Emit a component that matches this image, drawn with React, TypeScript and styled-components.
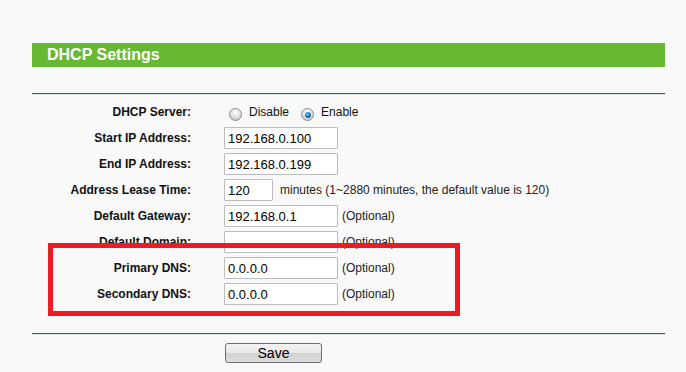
import React, { FC } from 'react';
import styled, { createGlobalStyle, css } from 'styled-components';

const GlobalStyle = createGlobalStyle`
  body {
    margin: 0;
    background: #f9f9f9;
    font-family: "Liberation Sans", Arial, sans-serif;
    color: #000;
  }
`;

const Page = styled.div`
  width: 633px;
  padding: 43px 0 0 32px;
`;

const Header = styled.div`
  height: 24px;
  line-height: 24px;
  background: #67b832;
  padding-left: 15px;
  color: #fff;
  font-weight: 700;
  font-size: 16px;
`;

const Divider = styled.div<{ gap: number }>`
  margin-top: ${props => props.gap}px;
  border-top: 1px solid #1c6b3a;
  border-bottom: 1px solid #dbe6de;
`;

const Form = styled.div`
  position: relative;
  padding-top: 4px;
  margin-bottom: 26px;
`;

const Row = styled.div`
  display: grid;
  grid-template-columns: 159px 1fr;
  column-gap: 33px;
  height: 26px;
  align-items: center;
`;

const Label = styled.div`
  text-align: right;
  font-weight: 700;
  font-size: 12px;
  color: #111;
`;

const Field = styled.div`
  display: flex;
  align-items: center;
  font-size: 12px;
  color: #222;
`;

const TextBox = styled.div<{ width?: number }>`
  box-sizing: border-box;
  width: ${props => props.width ?? 114}px;
  height: 22px;
  line-height: 22px;
  padding-left: 3px;
  background: #fff;
  border: 1px solid #bcbcbc;
  border-radius: 1px;
  font-size: 13px;
  color: #000;
  margin-right: ${props => (props.width ? 7 : 4)}px;
`;

const RadioDot = styled.span<{ checked?: boolean }>`
  box-sizing: border-box;
  display: inline-block;
  width: 13px;
  height: 13px;
  border-radius: 50%;
  border: 1px solid #8e8e8e;
  background: radial-gradient(circle at 50% 30%, #ffffff 0%, #dedede 55%, #bdbdbd 100%);
  margin: 5px 7px 0 5px;
  position: relative;
  ${props => props.checked && css`
    &:after {
      content: '';
      position: absolute;
      left: 2.5px;
      top: 2.5px;
      width: 6px;
      height: 6px;
      border-radius: 50%;
      background: radial-gradient(circle at 40% 35%, #6cc6ff 0%, #1570b3 55%, #083f69 100%);
    }
  `}
`;

const RadioText = styled.span`
  margin-right: 7px;
  font-size: 12px;
  color: #111;
`;

const Annotation = styled.div`
  position: absolute;
  left: 16px;
  top: 148px;
  width: 412px;
  height: 73px;
  box-sizing: border-box;
  border: 5px solid #ed1c24;
  pointer-events: none;
`;

const ButtonBar = styled.div`
  padding: 8px 0 0 193px;
`;

const SaveButton = styled.button`
  box-sizing: border-box;
  width: 97px;
  height: 20px;
  padding: 0;
  border: 1px solid #6f6f6f;
  border-radius: 3px;
  background: linear-gradient(#f4f4f4 0%, #e8e8e8 50%, #d2d2d2 51%, #dcdcdc 100%);
  font-family: "Liberation Sans", Arial, sans-serif;
  font-size: 14px;
  line-height: 18px;
  color: #000;
`;

interface IField {
  label: string;
  value: string;
  note?: string;
  width?: number;
}

const fields: IField[] = [
  { label: 'Start IP Address:', value: '192.168.0.100' },
  { label: 'End IP Address:', value: '192.168.0.199' },
  { label: 'Address Lease Time:', value: '120', width: 49, note: 'minutes (1~2880 minutes, the default value is 120)' },
  { label: 'Default Gateway:', value: '192.168.0.1', note: '(Optional)' },
  { label: 'Default Domain:', value: '', note: '(Optional)' },
  { label: 'Primary DNS:', value: '0.0.0.0', note: '(Optional)' },
  { label: 'Secondary DNS:', value: '0.0.0.0', note: '(Optional)' },
];

const App: FC = () => (
  <>
    <GlobalStyle />
    <Page>
      <Header>DHCP Settings</Header>
      <Divider gap={26} />
      <Form>
        <Row>
          <Label>DHCP Server:</Label>
          <Field>
            <RadioDot />
            <RadioText>Disable</RadioText>
            <RadioDot checked />
            <RadioText>Enable</RadioText>
          </Field>
        </Row>
        {fields.map(f => (
          <Row key={f.label}>
            <Label>{f.label}</Label>
            <Field>
              <TextBox width={f.width}>{f.value}</TextBox>
              {f.note}
            </Field>
          </Row>
        ))}
        <Annotation />
      </Form>
      <Divider gap={0} />
      <ButtonBar>
        <SaveButton>Save</SaveButton>
      </ButtonBar>
    </Page>
  </>
);

export default App;
